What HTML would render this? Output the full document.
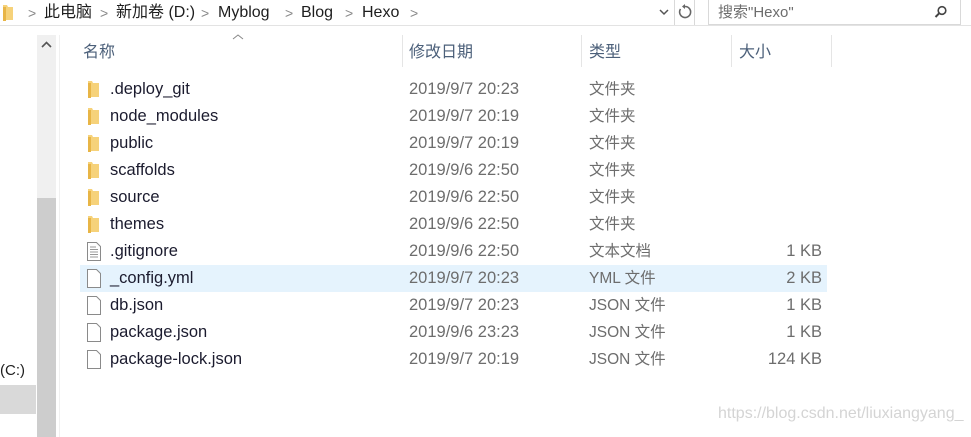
<!DOCTYPE html>
<html><head><meta charset="utf-8"><style>
body{margin:0;width:971px;height:437px;background:#fff;position:relative;overflow:hidden;font-family:"Liberation Sans","Noto Sans CJK SC",sans-serif;font-size:16.5px}
.a{position:absolute;white-space:nowrap}
.crumb{color:#1e1e1e;top:1px;line-height:24px;font-size:16px}
.sep{color:#888;top:1px;line-height:24px;font-size:14px}
.hdr{color:#4c607a;top:37px;line-height:32px;font-size:16px}
.vl{position:absolute;width:1px;background:#e5e5e5;top:35px;height:32px}
.row{position:absolute;left:80px;width:747px;height:27px;line-height:27px}
.row span{position:absolute;top:0}
.n{left:30px;color:#1b1b2e}
.d{left:329px;color:#6d6d6d}
.t{left:509px;color:#6d6d6d;font-size:15.5px}
.s{right:5px;color:#6d6d6d}
.ic{position:absolute;left:7px;top:4px}
</style></head><body>
<div class="a" style="left:0;top:25px;width:971px;height:1px;background:#e3e3e3"></div>
<svg class="a" style="left:2px;top:4px" width="12" height="18"><path d="M1 1h4l1 2h5v13H1z" fill="#f6d27a"/><path d="M1 3h3v14H1z" fill="#e8b546"/></svg>
<span class="a sep" style="left:28px">&gt;</span>
<span class="a crumb" style="left:44px">此电脑</span>
<span class="a sep" style="left:100px">&gt;</span>
<span class="a crumb" style="left:116px">新加卷 (D:)</span>
<span class="a sep" style="left:201px">&gt;</span>
<span class="a crumb" style="left:218px">Myblog</span>
<span class="a sep" style="left:285px">&gt;</span>
<span class="a crumb" style="left:301px">Blog</span>
<span class="a sep" style="left:345px">&gt;</span>
<span class="a crumb" style="left:362px">Hexo</span>
<span class="a sep" style="left:410px">&gt;</span>
<div class="a" style="left:0;top:0;width:695px;height:25px;border-right:1px solid #d9d9d9;box-sizing:border-box"></div>
<svg class="a" style="left:658px;top:7px" width="12" height="10"><path d="M2 3l4 4 4-4" stroke="#555" stroke-width="1.5" fill="none"/></svg>
<div class="a" style="left:674px;top:0;width:1px;height:25px;background:#d9d9d9"></div>
<svg class="a" style="left:677px;top:4px" width="16" height="16"><path d="M8 2.5A5.5 5.5 0 1 1 3.5 5" stroke="#666" stroke-width="1.6" fill="none"/><path d="M8 0v5l-3-2.5z" fill="#666"/></svg>
<div class="a" style="left:708px;top:-1px;width:253px;height:26px;border:1px solid #d9d9d9;box-sizing:border-box"></div>
<span class="a" style="left:718px;top:1px;line-height:24px;color:#6d6d6d;font-size:15px">搜索"Hexo"</span>
<svg class="a" style="left:934px;top:5px" width="14" height="14"><circle cx="8" cy="5.5" r="3.8" stroke="#444" stroke-width="1.6" fill="none"/><path d="M5.3 8.2L1.5 12" stroke="#444" stroke-width="2"/></svg>
<div class="a" style="left:37px;top:35px;width:19px;height:402px;background:#f0f0f0"></div>
<div class="a" style="left:37px;top:198px;width:19px;height:239px;background:#cdcdcd"></div>
<svg class="a" style="left:40px;top:40px" width="13" height="10"><path d="M2 7l4.5-4.5L11 7" stroke="#555" stroke-width="1.6" fill="none"/></svg>
<div class="a" style="left:59px;top:35px;width:1px;height:402px;background:#f0f0f0"></div>
<span class="a" style="left:0;top:360px;line-height:22px;color:#1e1e1e;font-size:15px">(C:)</span>
<div class="a" style="left:0;top:385px;width:36px;height:29px;background:#d9d9d9"></div>
<svg class="a" style="left:232px;top:33px" width="12" height="8"><path d="M1 6l5-4 5 4" stroke="#888" stroke-width="1" fill="none"/></svg>
<span class="a hdr" style="left:83px">名称</span>
<div class="vl" style="left:402px"></div>
<span class="a hdr" style="left:409px">修改日期</span>
<div class="vl" style="left:581px"></div>
<span class="a hdr" style="left:589px">类型</span>
<div class="vl" style="left:731px"></div>
<span class="a hdr" style="left:739px">大小</span>
<div class="vl" style="left:831px"></div>

<div class="row" style="top:76px"><svg class="ic" width="14" height="19"><path d="M1 1h4l1 2h6v14H1z" fill="#f6d27a"/><path d="M1 3h3v15H1z" fill="#e8b546"/></svg><span class="n">.deploy_git</span><span class="d">2019/9/7 20:23</span><span class="t">文件夹</span></div>
<div class="row" style="top:103px"><svg class="ic" width="14" height="19"><path d="M1 1h4l1 2h6v14H1z" fill="#f6d27a"/><path d="M1 3h3v15H1z" fill="#e8b546"/></svg><span class="n">node_modules</span><span class="d">2019/9/7 20:19</span><span class="t">文件夹</span></div>
<div class="row" style="top:130px"><svg class="ic" width="14" height="19"><path d="M1 1h4l1 2h6v14H1z" fill="#f6d27a"/><path d="M1 3h3v15H1z" fill="#e8b546"/></svg><span class="n">public</span><span class="d">2019/9/7 20:19</span><span class="t">文件夹</span></div>
<div class="row" style="top:157px"><svg class="ic" width="14" height="19"><path d="M1 1h4l1 2h6v14H1z" fill="#f6d27a"/><path d="M1 3h3v15H1z" fill="#e8b546"/></svg><span class="n">scaffolds</span><span class="d">2019/9/6 22:50</span><span class="t">文件夹</span></div>
<div class="row" style="top:184px"><svg class="ic" width="14" height="19"><path d="M1 1h4l1 2h6v14H1z" fill="#f6d27a"/><path d="M1 3h3v15H1z" fill="#e8b546"/></svg><span class="n">source</span><span class="d">2019/9/6 22:50</span><span class="t">文件夹</span></div>
<div class="row" style="top:211px"><svg class="ic" width="14" height="19"><path d="M1 1h4l1 2h6v14H1z" fill="#f6d27a"/><path d="M1 3h3v15H1z" fill="#e8b546"/></svg><span class="n">themes</span><span class="d">2019/9/6 22:50</span><span class="t">文件夹</span></div>
<div class="row" style="top:238px"><svg class="ic" width="14" height="19"><path d="M.5.5h9l4 4v14H.5z" fill="#fff" stroke="#8a8a8a"/><path d="M3 5h6M3 7.5h8M3 10h8M3 12.5h8M3 15h8" stroke="#999"/></svg><span class="n">.gitignore</span><span class="d">2019/9/6 22:50</span><span class="t">文本文档</span><span class="s">1 KB</span></div>
<div class="row" style="top:265px;background:#e5f3fd"><svg class="ic" width="14" height="19"><path d="M.5.5h9l4 4v14H.5z" fill="#fff" stroke="#8a8a8a"/></svg><span class="n">_config.yml</span><span class="d">2019/9/7 20:23</span><span class="t">YML 文件</span><span class="s">2 KB</span></div>
<div class="row" style="top:292px"><svg class="ic" width="14" height="19"><path d="M.5.5h9l4 4v14H.5z" fill="#fff" stroke="#8a8a8a"/></svg><span class="n">db.json</span><span class="d">2019/9/7 20:23</span><span class="t">JSON 文件</span><span class="s">1 KB</span></div>
<div class="row" style="top:319px"><svg class="ic" width="14" height="19"><path d="M.5.5h9l4 4v14H.5z" fill="#fff" stroke="#8a8a8a"/></svg><span class="n">package.json</span><span class="d">2019/9/6 23:23</span><span class="t">JSON 文件</span><span class="s">1 KB</span></div>
<div class="row" style="top:346px"><svg class="ic" width="14" height="19"><path d="M.5.5h9l4 4v14H.5z" fill="#fff" stroke="#8a8a8a"/></svg><span class="n">package-lock.json</span><span class="d">2019/9/7 20:19</span><span class="t">JSON 文件</span><span class="s">124 KB</span></div>

<span class="a" style="left:718px;top:405px;color:#d4d4d4;font-size:16px">https://blog.csdn.net/liuxiangyang_</span>
</body></html>
